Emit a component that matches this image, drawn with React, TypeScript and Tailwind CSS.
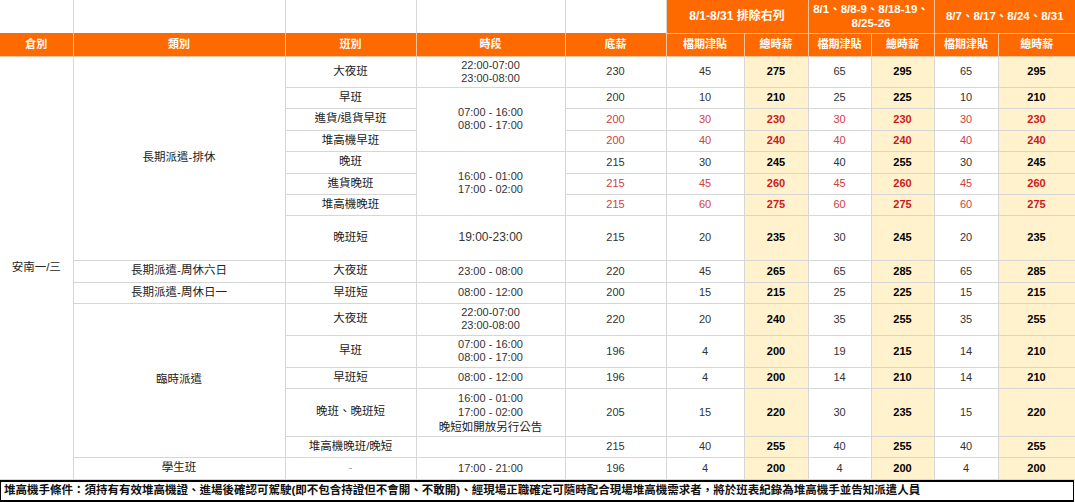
import React from "react";

type C4 = { lines: string[]; span: number; big?: boolean };
type R = {
  c2?: { t: string; span: number };
  c3: string;
  c4?: C4;
  v: number[];
  red?: boolean;
  h: number;
};

const rows: R[] = [
  { c2: { t: "長期派遣-排休", span: 8 }, c3: "大夜班", c4: { lines: ["22:00-07:00", "23:00-08:00"], span: 1 }, v: [230, 45, 275, 65, 295, 65, 295], h: 31 },
  { c3: "早班", c4: { lines: ["07:00 - 16:00", "08:00 - 17:00"], span: 3 }, v: [200, 10, 210, 25, 225, 10, 210], h: 21 },
  { c3: "進貨/退貨早班", v: [200, 30, 230, 30, 230, 30, 230], red: true, h: 22 },
  { c3: "堆高機早班", v: [200, 40, 240, 40, 240, 40, 240], red: true, h: 21 },
  { c3: "晚班", c4: { lines: ["16:00 - 01:00", "17:00 - 02:00"], span: 3 }, v: [215, 30, 245, 40, 255, 30, 245], h: 22 },
  { c3: "進貨晚班", v: [215, 45, 260, 45, 260, 45, 260], red: true, h: 21 },
  { c3: "堆高機晚班", v: [215, 60, 275, 60, 275, 60, 275], red: true, h: 21 },
  { c3: "晚班短", c4: { lines: ["19:00-23:00"], span: 1, big: true }, v: [215, 20, 235, 30, 245, 20, 235], h: 45 },
  { c2: { t: "長期派遣-周休六日", span: 1 }, c3: "大夜班", c4: { lines: ["23:00 - 08:00"], span: 1 }, v: [220, 45, 265, 65, 285, 65, 285], h: 22 },
  { c2: { t: "長期派遣-周休日一", span: 1 }, c3: "早班短", c4: { lines: ["08:00 - 12:00"], span: 1 }, v: [200, 15, 215, 25, 225, 15, 215], h: 21 },
  { c2: { t: "臨時派遣", span: 5 }, c3: "大夜班", c4: { lines: ["22:00-07:00", "23:00-08:00"], span: 1 }, v: [220, 20, 240, 35, 255, 35, 255], h: 32 },
  { c3: "早班", c4: { lines: ["07:00 - 16:00", "08:00 - 17:00"], span: 1 }, v: [196, 4, 200, 19, 215, 14, 210], h: 32 },
  { c3: "早班短", c4: { lines: ["08:00 - 12:00"], span: 1 }, v: [196, 4, 200, 14, 210, 14, 210], h: 21 },
  { c3: "晚班、晚班短", c4: { lines: ["16:00 - 01:00", "17:00 - 02:00", "晚短如開放另行公告"], span: 1 }, v: [205, 15, 220, 30, 235, 15, 220], h: 48 },
  { c3: "堆高機晚班/晚短", c4: { lines: [], span: 1 }, v: [215, 40, 255, 40, 255, 40, 255], h: 21 },
  { c2: { t: "學生班", span: 1 }, c3: "-", c4: { lines: ["17:00 - 21:00"], span: 1 }, v: [196, 4, 200, 4, 200, 4, 200], h: 22 },
];

const cell = "p-0 text-center align-middle border-r border-b border-[#d6d6d6]";
const hcell = "p-0 text-center align-middle border-r border-b border-[#f9c59c] bg-[#ff6a00] text-white font-bold";

export default function App() {
  return (
    <div
      className="w-[1075px] h-[502px] bg-white overflow-hidden"
      style={{ fontFamily: '"Liberation Sans", "Noto Sans CJK TC", Arial, sans-serif' }}
    >
      <table className="w-[1075px] table-fixed border-collapse text-[11px] text-[#222]">
        <colgroup>
          <col className="w-[73px]" />
          <col className="w-[212px]" />
          <col className="w-[131px]" />
          <col className="w-[149px]" />
          <col className="w-[101px]" />
          <col className="w-[78px]" />
          <col className="w-[64px]" />
          <col className="w-[63px]" />
          <col className="w-[63px]" />
          <col className="w-[64px]" />
          <col className="w-[77px]" />
        </colgroup>
        <tbody>
          <tr className="h-[33px]">
            <td className="p-0 border-r border-[#d6d6d6]" />
            <td className="p-0 border-r border-[#d6d6d6]" />
            <td className="p-0 border-r border-[#d6d6d6]" />
            <td className="p-0 border-r border-[#d6d6d6]" />
            <td className="p-0 border-r border-[#d6d6d6]" />
            <td colSpan={2} className={`${hcell} text-[12px]`}>8/1-8/31 排除右列</td>
            <td colSpan={2} className={`${hcell} text-[11.5px] leading-[14px]`}>
              8/1、8/8-9、8/18-19、
              <br />
              8/25-26
            </td>
            <td colSpan={2} className={`${hcell} text-[11.5px] border-r-0`}>8/7、8/17、8/24、8/31</td>
          </tr>
          <tr className="h-[23px]">
            {["倉別", "類別", "班別", "時段", "底薪", "檔期津貼", "總時薪", "檔期津貼", "總時薪", "檔期津貼", "總時薪"].map((t, i) => (
              <td key={i} className={`${hcell} ${i === 10 ? "border-r-0" : ""}`}>
                {t}
              </td>
            ))}
          </tr>
          {rows.map((r, ri) => (
            <tr key={ri} style={{ height: r.h }}>
              {ri === 0 && (
                <td rowSpan={rows.length} className={`${cell} text-[11.5px]`}>
                  安南一/三
                </td>
              )}
              {r.c2 && (
                <td rowSpan={r.c2.span} className={`${cell} text-[11.5px]`}>
                  {r.c2.t}
                </td>
              )}
              <td className={`${cell} text-[11.5px] ${r.c3 === "-" ? "text-[#999]" : ""}`}>{r.c3}</td>
              {r.c4 && (
                <td
                  rowSpan={r.c4.span}
                  className={`${cell} text-[#333] ${r.c4.big ? "text-[12px]" : "text-[11px]"} ${
                    r.c4.lines.length === 3 ? "leading-[14px]" : "leading-[13px]"
                  }`}
                >
                  {r.c4.lines.map((l, li) => (
                    <div key={li} className={li === 2 ? "text-[11.5px] text-[#222] mt-[1px]" : ""}>
                      {l}
                    </div>
                  ))}
                </td>
              )}
              {r.v.map((n, vi) => {
                const total = vi === 2 || vi === 4 || vi === 6;
                const color = r.red
                  ? total
                    ? "text-[#cc1a1a]"
                    : "text-[#d2403c]"
                  : total
                  ? "text-black"
                  : "text-[#333]";
                return (
                  <td
                    key={vi}
                    className={`${cell} ${total ? "bg-[#fff2cc] font-bold" : ""} ${color} ${
                      vi === 6 ? "border-r-[#e4dccb]" : ""
                    }`}
                  >
                    {n}
                  </td>
                );
              })}
            </tr>
          ))}
        </tbody>
      </table>
      <div className="w-[1074px] h-[22px] border-y-2 border-x border-black flex items-center pl-[3px] text-[11.5px] font-bold text-[#111] whitespace-nowrap">
        堆高機手條件：須持有有效堆高機證、進場後確認可駕駛(即不包含持證但不會開、不敢開)、經現場正職確定可隨時配合現場堆高機需求者，將於班表紀錄為堆高機手並告知派遣人員
      </div>
    </div>
  );
}
